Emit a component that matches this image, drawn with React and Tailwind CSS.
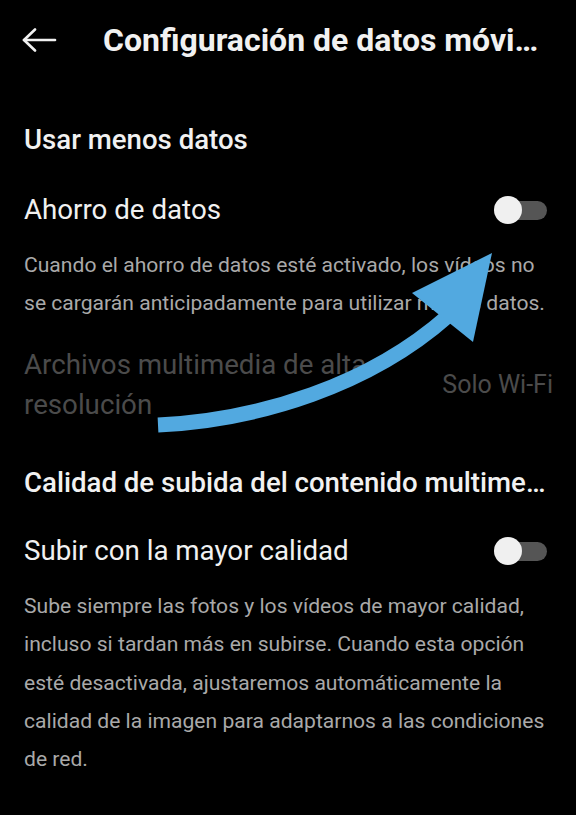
import React from "react";

function Toggle() {
    return (
        <div className="relative w-[53px] h-[28px] mr-[5px] shrink-0 flex items-center">
            <div className="absolute right-0 w-[47px] h-[19px] rounded-full bg-[#555555]" />
            <div className="absolute left-0 w-[28px] h-[28px] rounded-full bg-[#f0f0f0]" />
        </div>
    );
}

export default function App() {
    return (
        <div className="relative w-[576px] h-[815px] bg-black overflow-hidden text-[#f1f1f1]" style={{ fontFamily: "Roboto, 'Noto Sans', sans-serif" }}>
            <header className="h-20 flex items-center pl-[22px] pr-6">
                <svg width="36" height="24" viewBox="0 0 36 24" fill="none" stroke="#f1f1f1" strokeWidth="2.6" strokeLinecap="round" strokeLinejoin="round">
                    <path d="M2 12 H33" />
                    <path d="M13 1.5 L2 12 L13 22.5" />
                </svg>
                <h1 className="ml-[45px] text-[32px] font-bold truncate w-[440px]">
                    Configuración de datos móviles
                </h1>
            </header>

            <div className="px-6">
                <h2 className="mt-10 text-[27.6px] leading-[40px] font-medium">Usar menos datos</h2>

                <div className="mt-[30px] h-10 flex items-center justify-between">
                    <span className="text-[27.7px]">Ahorro de datos</span>
                    <Toggle />
                </div>
                <p className="mt-4 text-[21.1px] leading-[38px] text-[#a9a9a9]">
                    Cuando el ahorro de datos esté activado, los vídeos no se cargarán anticipadamente para utilizar menos datos.
                </p>

                <div className="mt-[23px] flex items-center justify-between text-[#4b4b4b]">
                    <span className="text-[27.7px] leading-[40px] w-[380px]">Archivos multimedia de alta resolución</span>
                    <span className="text-[25px] -mr-[1px]">Solo Wi-Fi</span>
                </div>

                <h2 className="mt-[38px] text-[27.6px] leading-[40px] font-medium truncate">
                    Calidad de subida del contenido multimedia
                </h2>

                <div className="mt-[28px] h-10 flex items-center justify-between">
                    <span className="text-[27.7px]">Subir con la mayor calidad</span>
                    <Toggle />
                </div>
                <p className="mt-4 text-[21.1px] leading-[38.3px] text-[#a9a9a9]">
                    Sube siempre las fotos y los vídeos de mayor calidad, incluso si tardan más en subirse. Cuando esta opción esté desactivada, ajustaremos automáticamente la calidad de la imagen para adaptarnos a las condiciones de red.
                </p>
            </div>

            {/* annotation arrow */}
            <svg className="absolute left-0 top-0 pointer-events-none" width="576" height="815" viewBox="0 0 576 815">
                <path d="M158 425 C260 420 370 385 448 316" stroke="#52a9e0" strokeWidth="15" fill="none" />
                <polygon points="492,253 412,293 473,342" fill="#52a9e0" />
            </svg>
        </div>
    );
}
